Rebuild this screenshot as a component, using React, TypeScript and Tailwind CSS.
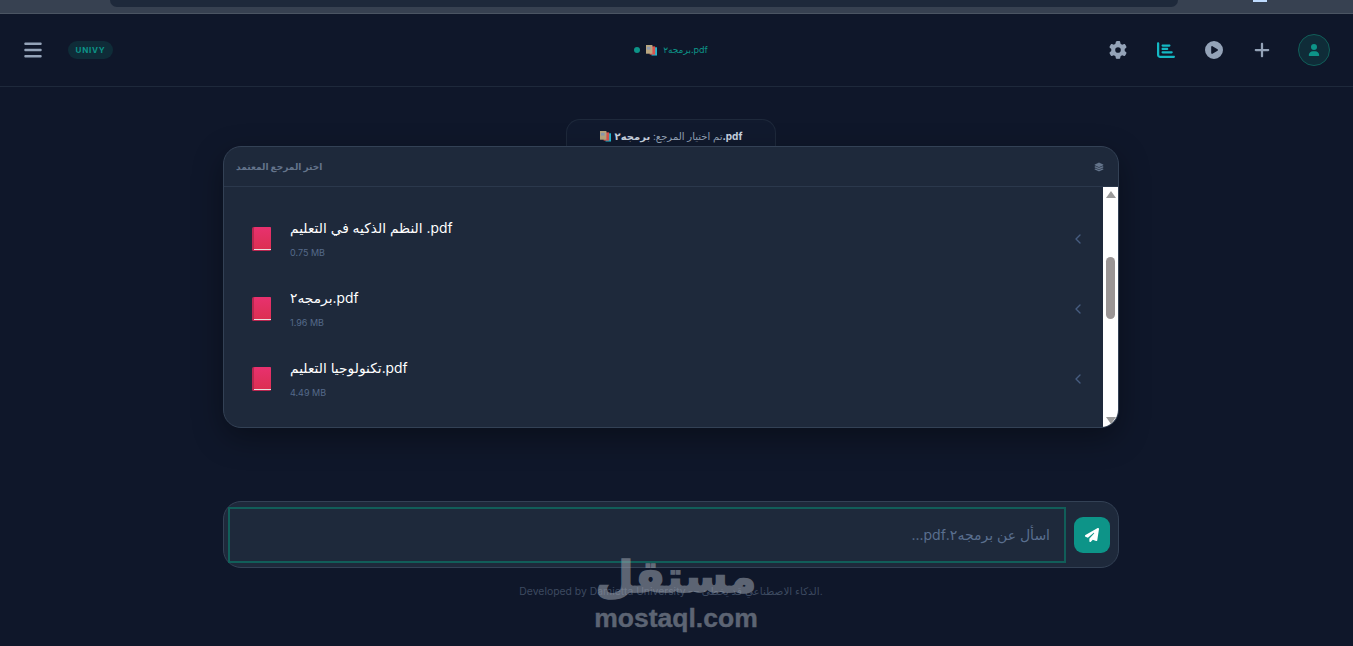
import { FaBars, FaGear, FaChartBar, FaCirclePlay, FaPlus, FaUser, FaLayerGroup, FaPaperPlane } from "react-icons/fa6";
import { ChevronLeft } from "lucide-react";

const font = "[font-family:Inter,'DejaVu_Sans',sans-serif]";

function Books({ size = 11 }: { size?: number }) {
  return (
    <svg width={size} height={size} viewBox="0 0 12 12" className="shrink-0">
      <rect x="6" y="2.5" width="6" height="9" fill="#22b8cf" />
      <rect x="4" y="1.5" width="6" height="9" fill="#d9534f" />
      <rect x="0" y="0" width="7" height="9.5" fill="#b9a67f" />
      <rect x="1" y="2" width="4" height="3" fill="#8d99ae" />
    </svg>
  );
}

function Book() {
  return (
    <svg width="19" height="24" viewBox="0 0 19 24" className="shrink-0">
      <defs>
        <linearGradient id="bookFill" x1="0" y1="0" x2="0" y2="1">
          <stop offset="0" stopColor="#e8316f" />
          <stop offset="1" stopColor="#dc2f52" />
        </linearGradient>
      </defs>
      <rect x="0" y="0" width="19" height="24" rx="1.5" fill="#b8264f" />
      <rect x="2" y="0" width="17" height="22" rx="1" fill="url(#bookFill)" />
      <rect x="2" y="22" width="17" height="1" fill="#e8dfe0" />
    </svg>
  );
}

const files = [
  { name: "النظم الذكيه في التعليم .pdf", size: "0.75 MB" },
  { name: "برمجه٢.pdf", size: "1.96 MB" },
  { name: "تكنولوجيا التعليم.pdf", size: "4.49 MB" },
];

export default function App() {
  return (
    <div className={`relative h-[646px] w-[1353px] overflow-hidden bg-[#0f172a] ${font}`}>
      {/* browser strip */}
      <div className="flex h-[14px] items-start border-b border-[#4b5563] bg-[#374151]">
        <div className="ml-[110px] h-[7px] w-[1068px] rounded-b-[10px] bg-[#1e293b]" />
        <div className="ml-[75px] h-[2px] w-[14px] bg-[#bfdbfe]" />
      </div>

      {/* header */}
      <header className="flex h-[73px] items-center justify-between border-b border-[#1e293b] pl-[23px] pr-[23px]">
        <div className="flex w-[300px] items-center gap-[27px]">
          <FaBars className="text-[#94a3b8]" size={20} />
          <span className="-ml-[2px] flex h-[18px] w-[45px] items-center justify-center rounded-full bg-[#0f2c38] text-[8px] font-bold tracking-[0.1em] text-[#0d9488]">
            UNIVY
          </span>
        </div>
        <div className="mr-[11px] flex items-center gap-[6px]">
          <span className="h-[6px] w-[6px] rounded-full bg-[#0d9488]" />
          <Books />
          <span className="text-[9px] text-[#0d9488]">برمجه٢.pdf</span>
        </div>
        <div className="flex w-[300px] items-center justify-end">
          <span className="flex w-[48px] justify-center"><FaGear className="text-[#94a3b8]" size={18} /></span>
          <span className="flex w-[48px] justify-center"><FaChartBar className="text-[#14b8c4]" size={18} /></span>
          <span className="flex w-[48px] justify-center"><FaCirclePlay className="text-[#94a3b8]" size={18} /></span>
          <span className="flex w-[48px] justify-center"><FaPlus className="text-[#94a3b8]" size={18} /></span>
          <div className="ml-[12px] flex h-8 w-8 items-center justify-center rounded-full border border-[#115e59] bg-[#0f2c38]">
            <FaUser className="text-[#0d9488]" size={12} />
          </div>
        </div>
      </header>

      {/* main */}
      <main className="flex w-[1342px] flex-col items-center">
        <div className="mt-[32px] flex h-[27px] w-[210px] items-start justify-center gap-[4px] rounded-t-[14px] border border-b-0 border-[#1e293b] bg-[#111a2e] pt-[9px]">
          <span className="mt-[2px] flex"><Books /></span>
          <span className="text-[10px] leading-[14px] text-[#94a3b8]">
            تم اختيار المرجع: <b className="text-[#cbd5e1]">برمجه٢.pdf</b>
          </span>
        </div>

        <section className="flex h-[282px] w-[896px] flex-col overflow-hidden rounded-[18px] border border-[#334155] bg-[#1e293b] shadow-[0_10px_30px_rgba(0,0,0,0.35)]">
          <div className="flex h-[40px] shrink-0 items-center justify-between border-b border-[#2b384c] pl-[12px] pr-[14px]">
            <span className="text-[9px] font-bold text-[#64748b]">اختر المرجع المعتمد</span>
            <FaLayerGroup className="text-[#64748b]" size={10} />
          </div>
          <div className="flex min-h-0 flex-1">
            <div className="flex flex-1 flex-col pt-[17px]">
              {files.map((f) => (
                <div key={f.size} className="flex h-[70px] items-center pl-[28px] pr-[17px]">
                  <Book />
                  <div className="ml-[19px] flex-1 pb-[2px]">
                    <div className="text-[13.8px] leading-[20px] text-white">{f.name}</div>
                    <div className="mt-[9px] text-[9px] leading-[12px] text-[#55698a]">{f.size}</div>
                  </div>
                  <ChevronLeft className="text-[#475d80]" size={16} strokeWidth={2} />
                </div>
              ))}
            </div>
            {/* native-looking scrollbar */}
            <div className="flex w-[15px] shrink-0 flex-col items-center bg-white">
              <div className="mt-[4px] h-0 w-0 border-x-[5px] border-b-[7px] border-x-transparent border-b-[#9a9a9a]" />
              <div className="mt-[59px] h-[62px] w-[9px] rounded-full bg-[#9a9595]" />
              <div className="mt-auto mb-[3px] h-0 w-0 border-x-[5px] border-t-[7px] border-x-transparent border-t-[#9a9a9a]" />
            </div>
          </div>
        </section>

        {/* input */}
        <div className="mt-[73px] flex h-[67px] w-[896px] items-center gap-[8px] rounded-[18px] border border-[#334155] bg-[#1e293b] pl-[4px] pr-[8px]">
          <div dir="rtl" className="flex h-[56px] flex-1 items-center border-2 border-[#115e59] pr-[14px] text-[14px] text-[#5a6f8f]">
            اسأل عن برمجه٢.pdf...
          </div>
          <button className="flex h-9 w-9 items-center justify-center rounded-[9px] bg-[#0d9488]">
            <FaPaperPlane className="text-white" size={14} />
          </button>
        </div>

        <p className="mt-[17px] text-[10.4px] leading-[14px] text-[#3d4a60]">
          Developed by Damietta University — الذكاء الاصطناعي قد يخطئ.
        </p>
      </main>

      {/* watermark */}
      <div className="pointer-events-none absolute left-[594px] top-[546px] flex w-[164px] flex-col items-center text-[#9ca3af] opacity-55">
        <span dir="rtl" className="text-[44px] font-bold leading-[60px] [-webkit-text-stroke:1.5px_#9ca3af]">مستقل</span>
        <span className="-mt-[2px] text-[26.5px] font-bold leading-[28px] [-webkit-text-stroke:0.4px_#9ca3af] [font-family:'Liberation_Sans',sans-serif]">mostaql.com</span>
      </div>
    </div>
  );
}
